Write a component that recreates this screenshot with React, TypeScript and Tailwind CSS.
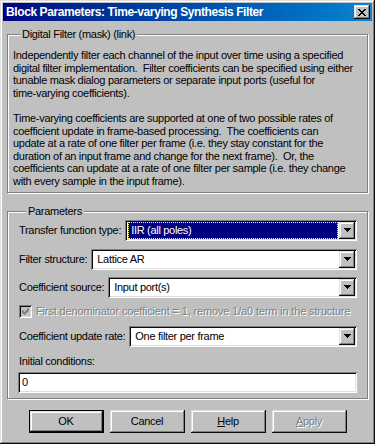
const raised =
  "shadow-[inset_-1px_-1px_#0a0a0a,inset_1px_1px_#dfdfdf,inset_-2px_-2px_#808080,inset_2px_2px_#ffffff]";
const sunken =
  "shadow-[inset_1px_1px_#808080,inset_-1px_-1px_#ffffff,inset_2px_2px_#0a0a0a,inset_-2px_-2px_#dfdfdf]";

function Arrow() {
  return (
    <svg width="7" height="4" viewBox="0 0 7 4">
      <path d="M0 0h7L3.5 4z" fill="#000" shapeRendering="crispEdges" />
    </svg>
  );
}

function Combo({ value, active }: { value: string; active?: boolean }) {
  return (
    <div className={`flex-1 h-[21px] bg-white flex items-center p-[2px] ${sunken}`}>
      <div className="flex-1 h-full pl-[1px] pr-[1px] flex items-center">
        {active ? (
          <div className="w-full h-full bg-[#000080] text-white border border-dotted border-[#ffff60] flex items-center pl-[2px]">
            {value}
          </div>
        ) : (
          <span className="pl-[3px]">{value}</span>
        )}
      </div>
      <div className={`w-[16px] h-[17px] bg-[#c0c0c0] flex items-center justify-center ${raised}`}>
        <Arrow />
      </div>
    </div>
  );
}

function Row({ label, value, active }: { label: string; value: string; active?: boolean }) {
  return (
    <div className="flex items-center gap-[4px]">
      <span className="whitespace-nowrap">{label}</span>
      <Combo value={value} active={active} />
    </div>
  );
}

function Btn({ children, primary, disabled }: { children: React.ReactNode; primary?: boolean; disabled?: boolean }) {
  return (
    <div
      className={`w-[75px] h-[23px] bg-[#c0c0c0] flex items-center justify-center ${
        primary ? "border border-black" : ""
      } ${raised} ${disabled ? "text-[#808080] [text-shadow:1px_1px_#ffffff]" : ""}`}
    >
      {children}
    </div>
  );
}

export default function App() {
  return (
    <div
      className={`w-[375px] h-[444px] bg-[#c0c0c0] p-[3px] flex flex-col text-[11px] tracking-[-0.3px] text-black ${raised}`}
      style={{ fontFamily: '"Liberation Sans", Arial, sans-serif' }}
    >
      <div className="h-[18px] flex items-center justify-between pl-[3px] pr-[2px] bg-gradient-to-r from-[#000080] to-[#1084d0]">
        <span className="text-white font-bold text-[12px] tracking-[-0.4px] whitespace-nowrap">
          Block Parameters: Time-varying Synthesis Filter
        </span>
        <div className={`w-[16px] h-[14px] bg-[#c0c0c0] flex items-center justify-center ${raised}`}>
          <svg width="8" height="7" viewBox="0 0 8 7" shapeRendering="crispEdges">
            <path d="M0 0h2v1h1v1h2V1h1V0h2v1H7v1H6v1H5v1h1v1h1v1h1v1H6V6H5V5H3v1H2v1H0V6h1V5h1V4h1V3H2V2H1V1H0z" fill="#000" />
          </svg>
        </div>
      </div>

      <fieldset className="mt-[7px] mx-[4px] border border-[#808080] shadow-[inset_1px_1px_#ffffff,1px_1px_#ffffff] px-[5px] pb-[4px] pt-[8px]">
        <legend className="ml-[7px] px-[2px] bg-[#c0c0c0] leading-[13px]">Digital Filter (mask) (link)</legend>
        <div className="leading-[12.6px] whitespace-nowrap">
          <p>
            Independently filter each channel of the input over time using a specified
            <br />
            digital filter implementation.&nbsp; Filter coefficients can be specified using either
            <br />
            tunable mask dialog parameters or separate input ports (useful for
            <br />
            time-varying coefficients).
          </p>
          <p className="mt-[12.6px]">
            Time-varying coefficients are supported at one of two possible rates of
            <br />
            coefficient update in frame-based processing.&nbsp; The coefficients can
            <br />
            update at a rate of one filter per frame (i.e. they stay constant for the
            <br />
            duration of an input frame and change for the next frame).&nbsp; Or, the
            <br />
            coefficients can update at a rate of one filter per sample (i.e. they change
            <br />
            with every sample in the input frame).
          </p>
        </div>
      </fieldset>

      <fieldset className="mt-[12px] mx-[4px] border border-[#808080] shadow-[inset_1px_1px_#ffffff,1px_1px_#ffffff] pl-[11px] pr-[10px] pb-[5px] pt-[2px]">
        <legend className="ml-[7px] px-[2px] bg-[#c0c0c0] leading-[13px]">Parameters</legend>
        <div className="flex flex-col">
          <Row label="Transfer function type:" value="IIR (all poles)" active />
          <div className="mt-[8px]">
            <Row label="Filter structure:" value="Lattice AR" />
          </div>
          <div className="mt-[7px]">
            <Row label="Coefficient source:" value="Input port(s)" />
          </div>
          <div className="mt-[7px] h-[14px] flex items-center gap-[4px]">
            <div className={`w-[13px] h-[13px] bg-[#c0c0c0] flex items-center justify-center ${sunken}`}>
              <svg width="7" height="7" viewBox="0 0 7 7" shapeRendering="crispEdges">
                <path d="M6 0h1v3H6v1H5v1H4v1H3v1H2V6H1V5H0V2h1v1h1v1h1V3h1V2h1V1h1z" fill="#808080" />
              </svg>
            </div>
            <span className="text-[#808080] tracking-[-0.15px] [text-shadow:1px_1px_#ffffff] whitespace-nowrap">
              First denominator coefficient = 1, remove 1/a0 term in the structure
            </span>
          </div>
          <div className="mt-[7px]">
            <Row label="Coefficient update rate:" value="One filter per frame" />
          </div>
          <div className="mt-[8px] leading-[13px]">Initial conditions:</div>
          <div className={`mt-[4px] h-[21px] bg-white flex items-center pl-[4px] -ml-[1px] ${sunken}`}>0</div>
        </div>
      </fieldset>

      <div className="mt-[11px] flex justify-center gap-[6px]">
        <Btn primary>OK</Btn>
        <Btn>Cancel</Btn>
        <Btn>
          <span>
            <span className="underline">H</span>elp
          </span>
        </Btn>
        <Btn disabled>
          <span>
            <span className="underline">A</span>pply
          </span>
        </Btn>
      </div>
    </div>
  );
}
